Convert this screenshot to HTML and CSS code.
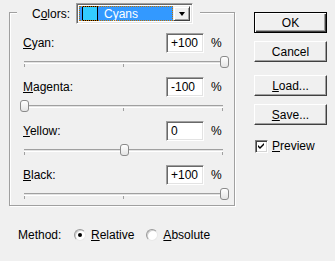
FILE: index.html
```html
<!DOCTYPE html>
<html>
<head>
<meta charset="utf-8">
<link rel="stylesheet" href="styles.css">
</head>
<body>
<div class="dialog">
  <div class="left">
    <div class="group">
      <div class="group-head">
        <span class="head-label">C<u>o</u>lors:</span>
        <div class="select">
          <div class="select-value">
            <span class="swatch"></span>
            <span class="select-text">Cyans</span>
          </div>
          <div class="select-btn"><span class="arrow"></span></div>
        </div>
      </div>

      <div class="adj">
        <div class="adj-row">
          <span class="adj-label"><u>C</u>yan:</span>
          <span class="field">+100</span>
          <span class="pct">%</span>
        </div>
        <div class="slider">
          <div class="track"></div>
          <div class="ticks"><i></i><i></i><i></i></div>
          <div class="thumb" style="left: calc((100% - 9px) * 1)"></div>
        </div>
      </div>

      <div class="adj">
        <div class="adj-row">
          <span class="adj-label"><u>M</u>agenta:</span>
          <span class="field">-100</span>
          <span class="pct">%</span>
        </div>
        <div class="slider">
          <div class="track"></div>
          <div class="ticks"><i></i><i></i><i></i></div>
          <div class="thumb" style="left: calc((100% - 9px) * 0)"></div>
        </div>
      </div>

      <div class="adj">
        <div class="adj-row">
          <span class="adj-label"><u>Y</u>ellow:</span>
          <span class="field">0</span>
          <span class="pct">%</span>
        </div>
        <div class="slider">
          <div class="track"></div>
          <div class="ticks"><i></i><i></i><i></i></div>
          <div class="thumb" style="left: calc((100% - 9px) * 0.5)"></div>
        </div>
      </div>

      <div class="adj">
        <div class="adj-row">
          <span class="adj-label"><u>B</u>lack:</span>
          <span class="field">+100</span>
          <span class="pct">%</span>
        </div>
        <div class="slider">
          <div class="track"></div>
          <div class="ticks"><i></i><i></i><i></i></div>
          <div class="thumb" style="left: calc((100% - 9px) * 1)"></div>
        </div>
      </div>
    </div>

    <div class="method">
      <span class="method-label">Method:</span>
      <span class="radio checked"></span>
      <span class="radio-label"><u>R</u>elative</span>
      <span class="radio"></span>
      <span class="radio-label"><u>A</u>bsolute</span>
    </div>
  </div>

  <div class="right">
    <div class="btn default">OK</div>
    <div class="btn">Cancel</div>
    <div class="btn spaced"><u>L</u>oad...</div>
    <div class="btn"><u>S</u>ave...</div>
    <div class="check-row">
      <span class="checkbox">
        <svg width="7" height="7" viewBox="0 0 7 7"><path d="M0 2 L2 4 L6 0 L6 2 L2 6 L0 4 Z" fill="#000"/></svg>
      </span>
      <span class="check-label"><u>P</u>review</span>
    </div>
  </div>
</div>
</body>
</html>
```

FILE: styles.css
```css
html, body {
  margin: 0;
  padding: 0;
  background: #f0f0f0;
}
body {
  font-family: "Liberation Sans", Arial, sans-serif;
  font-size: 12px;
  color: #000;
  width: 335px;
  height: 261px;
  overflow: hidden;
}
u { text-decoration: underline; text-underline-offset: 1px; }

.dialog {
  display: flex;
  align-items: flex-start;
}

.left {
  padding-left: 9px;
  padding-top: 12px;
}

.group {
  width: 226px;
  height: 194px;
  box-sizing: border-box;
  border: 1px solid #a0a0a0;
  box-shadow: inset 1px 1px 0 #fff, 1px 1px 0 #fff;
  padding: 0 11px 0 13px;
}

.group-head {
  display: flex;
  align-items: center;
  width: fit-content;
  margin: -10px 0 0 -6px;
  padding: 0 7px 0 15px;
  background: #f0f0f0;
  height: 21px;
}
.head-label {
  width: 44px;
}

.select {
  display: flex;
  width: 117px;
  height: 21px;
  box-sizing: border-box;
  border: 1px solid;
  border-color: #a0a0a0 #fff #fff #a0a0a0;
  box-shadow: inset 1px 1px 0 #696969, inset -1px -1px 0 #e3e3e3;
  padding: 2px;
  background: #fff;
}
.select-value {
  flex: 1;
  display: flex;
  align-items: center;
  background: #3399ff;
  outline: 1px dotted #c07000;
  outline-offset: -1px;
  padding-left: 3px;
  color: #fff;
}
.swatch {
  width: 14px;
  height: 13px;
  border: 1px solid #000;
  background: #33ccff;
  margin-right: 6px;
}
.select-text {
  color: #fff;
  font-size: 12px;
}
.select-btn {
  width: 17px;
  box-sizing: border-box;
  background: #f0f0f0;
  border: 1px solid;
  border-color: #f0f0f0 #404040 #404040 #f0f0f0;
  box-shadow: inset 1px 1px 0 #fff, inset -1px -1px 0 #a0a0a0;
  display: flex;
  align-items: center;
  justify-content: center;
}
.arrow {
  width: 0;
  height: 0;
  border-left: 3.5px solid transparent;
  border-right: 3.5px solid transparent;
  border-top: 4px solid #000;
  margin-top: 1px;
}

.adj:first-of-type { }
.group-head + .adj { margin-top: 9px; }

.adj-row {
  display: flex;
  align-items: center;
  height: 20px;
}
.adj-label {
  flex: 1;
}
.field {
  width: 38px;
  height: 20px;
  box-sizing: border-box;
  background: #fff;
  border: 1px solid;
  border-color: #a0a0a0 #fff #fff #a0a0a0;
  box-shadow: inset 1px 1px 0 #696969, inset -1px -1px 0 #e3e3e3;
  padding: 2px 0 0 4px;
  line-height: 15px;
}
.pct {
  width: 12px;
  margin-left: 7px;
}

.slider {
  position: relative;
  height: 24px;
  width: 209px;
  margin-left: -3px;
}
.track {
  position: absolute;
  left: 4px;
  right: 6px;
  top: 8px;
  height: 1px;
  border-top: 1px solid #a0a0a0;
  border-bottom: 1px solid #fff;
  background: #e3e3e3;
}
.ticks {
  position: absolute;
  left: 4px;
  right: 6px;
  top: 11px;
  height: 3px;
  display: flex;
  justify-content: space-between;
}
.ticks i {
  width: 1px;
  height: 3px;
  background: #a0a0a0;
}
.thumb {
  position: absolute;
  top: 3px;
  width: 9px;
  height: 12px;
  box-sizing: border-box;
  border: 1px solid #8a8a8a;
  border-radius: 3px;
  background: linear-gradient(#ffffff, #e4e4e4);
}

.method {
  display: flex;
  align-items: center;
  height: 16px;
  margin-top: 21px;
  padding-left: 9px;
}
.method-label {
  width: 56px;
}
.radio {
  width: 12px;
  height: 12px;
  box-sizing: border-box;
  border-radius: 50%;
  border: 1px solid;
  border-color: #9a9a9a #e8e8e8 #e8e8e8 #9a9a9a;
  background: #fff;
  box-shadow: inset 1px 1px 0 #cfcfcf;
  display: flex;
  align-items: center;
  justify-content: center;
}
.radio.checked::after {
  content: "";
  width: 4px;
  height: 4px;
  border-radius: 50%;
  background: #000;
}
.radio-label {
  margin-left: 5px;
  margin-right: 12px;
}

.right {
  margin-left: 19px;
  padding-top: 12px;
  display: flex;
  flex-direction: column;
  gap: 8px;
}
.btn {
  width: 73px;
  height: 21px;
  box-sizing: border-box;
  border: 1px solid;
  border-color: #fff #404040 #404040 #fff;
  box-shadow: inset -1px -1px 0 #a0a0a0;
  background: #f0f0f0;
  display: flex;
  align-items: center;
  justify-content: center;
  line-height: 14px;
}
.btn.default {
  border: 1px solid #000;
  box-shadow: inset 1px 1px 0 #fff, inset -1px -1px 0 #404040, inset -2px -2px 0 #a0a0a0;
}
.btn.spaced { margin-top: 5px; }

.check-row {
  display: flex;
  align-items: center;
  margin-top: 6px;
  padding-left: 1px;
}
.checkbox {
  width: 13px;
  height: 13px;
  box-sizing: border-box;
  border: 1px solid;
  border-color: #808080 #fff #fff #808080;
  box-shadow: inset 1px 1px 0 #404040, inset -1px -1px 0 #d4d4d4;
  background: #fff;
  display: flex;
  align-items: center;
  justify-content: center;
}
.check-label {
  margin-left: 4px;
}
```
